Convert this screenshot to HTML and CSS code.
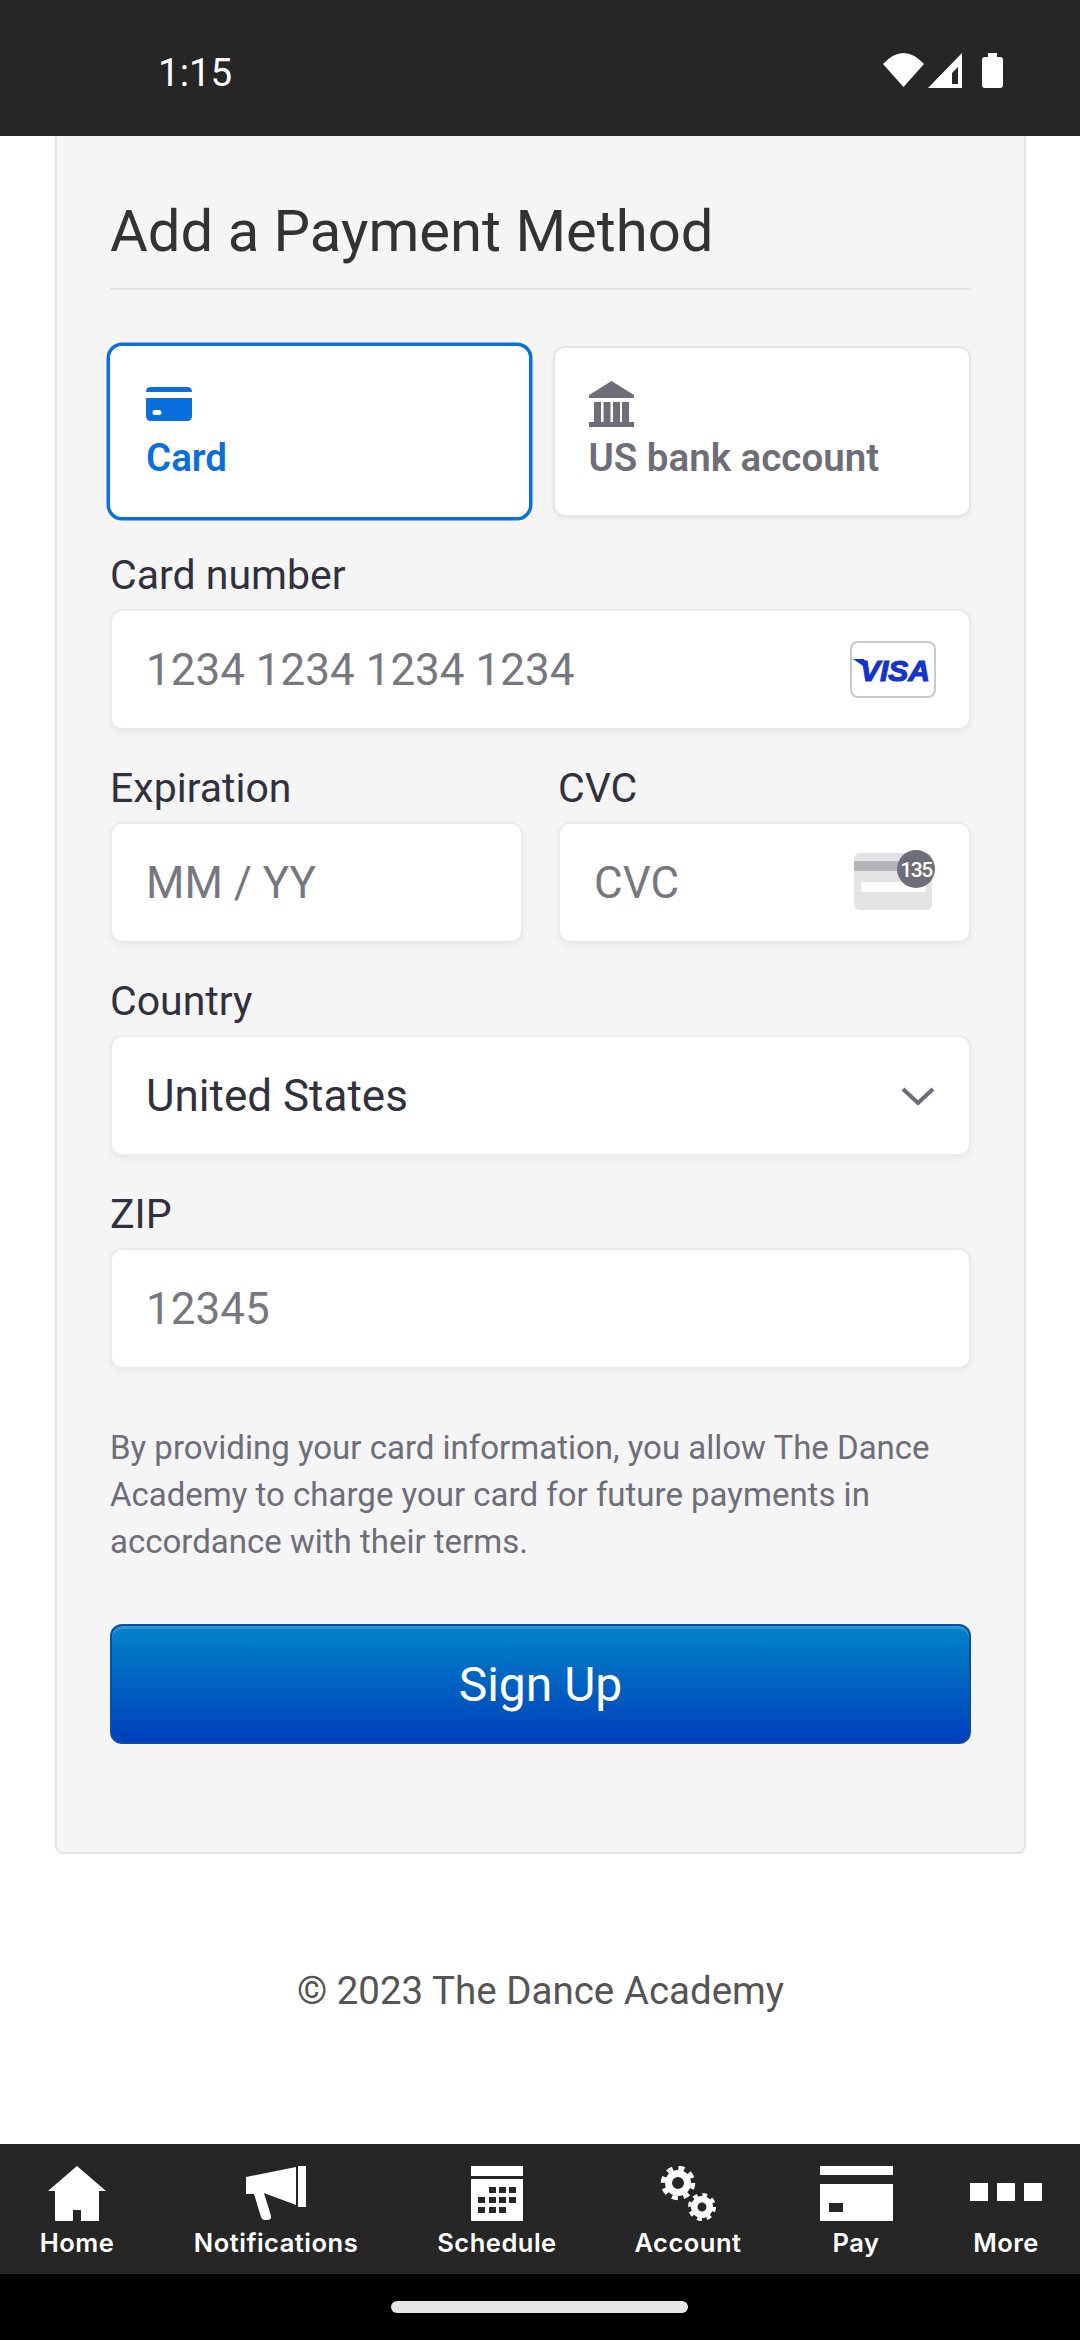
FILE: index.html
```html
<!DOCTYPE html>
<html lang="en">
  <head>
    <meta charset="UTF-8" />
    <meta name="viewport" content="width=device-width, initial-scale=1.0" />
    <title>Add a Payment Method</title>
    <link rel="stylesheet" href="styles.css">
  </head>
  <body>
    <div class="status-bar">
      <span class="status-time">1:15</span>
      <div class="status-icons">
        <svg width="41" height="34" viewBox="0 0 41 34"><path d="M20.5 34L0 11Q20.5-11 41 11Z" fill="#fff"/></svg>
        <svg class="status-cell" width="34" height="35" viewBox="0 0 34 35"><path fill-rule="evenodd" d="M34 0V35H0ZM24 31H30V14L24 20Z" fill="#fff"/></svg>
        <svg class="status-battery" width="21" height="35" viewBox="0 0 21 35"><path d="M6 0H15V4H18Q21 4 21 7V32Q21 35 18 35H3Q0 35 0 32V7Q0 4 3 4H6Z" fill="#fff"/></svg>
      </div>
    </div>

    <main class="page">
      <section class="card">
        <h1 class="card-title">Add a Payment Method</h1>

        <form class="payment-form">
          <div class="tabs">
            <div class="tab tab-active">
              <span class="tab-icon">
                <svg width="46" height="34" viewBox="0 0 46 34"><path fill-rule="evenodd" d="M0 5Q0 0 5 0H41Q46 0 46 5H0ZM0 11H46V29Q46 34 41 34H5Q0 34 0 29ZM9 23A2.500 2.500 0 0 0 9 28H13A2.500 2.500 0 0 0 13 23Z" fill="#0a6fdc"/></svg>
              </span>
              <span class="tab-label">Card</span>
            </div>
            <div class="tab">
              <span class="tab-icon">
                <svg width="45" height="46" viewBox="0 0 45 46"><g fill="#6d6e78"><path d="M22.5 0L45 14V17H0V14Z"/><rect x="5" y="21" width="7" height="20"/><rect x="14.5" y="21" width="7" height="20"/><rect x="24" y="21" width="7" height="20"/><rect x="33" y="21" width="7" height="20"/><rect y="41" width="45" height="5"/></g></svg>
              </span>
              <span class="tab-label">US bank account</span>
            </div>
          </div>

          <div class="field">
            <label class="field-label">Card number</label>
            <div class="input">
              <span class="placeholder">1234 1234 1234 1234</span>
              <svg class="visa-icon" width="86" height="57" viewBox="0 0 86 57">
                <rect x="1" y="1" width="84" height="55" rx="7" fill="#fff" stroke="#c9c9cc" stroke-width="2"/>
                <path d="M3 18L14 18L19 29Z" fill="#1434cb"/>
                <text class="visa-text" x="45" y="40" text-anchor="middle">VISA</text>
              </svg>
            </div>
          </div>

          <div class="field-row">
            <div class="field">
              <label class="field-label">Expiration</label>
              <div class="input"><span class="placeholder">MM / YY</span></div>
            </div>
            <div class="field">
              <label class="field-label">CVC</label>
              <div class="input">
                <span class="placeholder">CVC</span>
                <svg class="cvc-icon" width="82" height="60" viewBox="0 0 82 60">
                  <rect x="0" y="3" width="78" height="57" rx="6" fill="#e3e3e5"/>
                  <rect x="0" y="11" width="78" height="10" fill="#b6b6ba"/>
                  <rect x="7" y="32" width="65" height="10" rx="2" fill="#fff"/>
                  <circle cx="62" cy="19" r="19" fill="#6d6e78"/>
                  <text class="cvc-text" x="62" y="27" text-anchor="middle">135</text>
                </svg>
              </div>
            </div>
          </div>

          <div class="field">
            <label class="field-label">Country</label>
            <div class="input">
              <span class="input-value">United States</span>
              <svg width="34" height="20" viewBox="0 0 34 20"><path d="M2 3L17 17L32 3" fill="none" stroke="#6d6e78" stroke-width="4"/></svg>
            </div>
          </div>

          <div class="field">
            <label class="field-label">ZIP</label>
            <div class="input"><span class="placeholder">12345</span></div>
          </div>
        </form>

        <p class="terms">By providing your card information, you allow The Dance Academy to charge your card for future payments in accordance with their terms.</p>

        <button class="signup-button" type="button">Sign Up</button>
      </section>

      <footer class="copyright">© 2023 The Dance Academy</footer>
    </main>

    <nav class="tab-bar">
      <div class="nav-item">
        <svg width="58" height="55" viewBox="0 0 58 55"><path fill-rule="evenodd" d="M29 0L58 25H51V55H33V44H25V55H7V25H0Z" fill="#fff"/></svg>
        <span>Home</span>
      </div>
      <div class="nav-item">
        <svg width="60" height="55" viewBox="0 0 60 55"><g fill="#fff"><rect x="52" width="8" height="41"/><path d="M50 1V39L18 27L25 50Q25.500 54 21 54H19Q16 54 15 51L8 28H0V11Z"/></g></svg>
        <span>Notifications</span>
      </div>
      <div class="nav-item">
        <svg width="52" height="55" viewBox="0 0 52 55">
          <rect width="52" height="10" fill="#fff"/>
          <rect y="13" width="52" height="42" fill="#fff"/>
          <g fill="#262626">
            <rect x="18" y="21" width="7" height="6"/><rect x="28" y="21" width="7" height="6"/><rect x="38" y="21" width="7" height="6"/>
            <rect x="7" y="31" width="7" height="6"/><rect x="18" y="31" width="7" height="6"/><rect x="28" y="31" width="7" height="6"/><rect x="38" y="31" width="7" height="6"/>
            <rect x="7" y="41" width="7" height="6"/><rect x="18" y="41" width="7" height="6"/><rect x="28" y="41" width="7" height="6"/>
          </g>
        </svg>
        <span>Schedule</span>
      </div>
      <div class="nav-item">
        <svg width="56" height="55" viewBox="0 0 56 55" fill="none" stroke="#fff">
          <circle cx="18" cy="17" r="9.500" stroke-width="7"/>
          <circle cx="18" cy="17" r="15" stroke-width="4.500" stroke-dasharray="6 5.780"/>
          <circle cx="42" cy="41" r="7.750" stroke-width="6.500"/>
          <circle cx="42" cy="41" r="12" stroke-width="4" stroke-dasharray="4.700 4.725"/>
        </svg>
        <span>Account</span>
      </div>
      <div class="nav-item">
        <svg width="73" height="55" viewBox="0 0 73 55"><path fill-rule="evenodd" d="M0 0H73V9H0ZM0 18H73V55H0ZM9 37V46H23V37Z" fill="#fff"/></svg>
        <span>Pay</span>
      </div>
      <div class="nav-item">
        <svg width="72" height="55" viewBox="0 0 72 55"><g fill="#fff"><rect y="17" width="18" height="18"/><rect x="27" y="17" width="18" height="18"/><rect x="54" y="17" width="18" height="18"/></g></svg>
        <span>More</span>
      </div>
    </nav>

    <div class="gesture-bar"><div class="gesture-pill"></div></div>
  </body>
</html>
```

FILE: styles.css
```css
* {
  box-sizing: border-box;
}
body {
  margin: 0;
  width: 1080px;
  height: 2340px;
  display: flex;
  flex-direction: column;
  font-family: Roboto, "Liberation Sans", sans-serif;
  background-color: #fff;
  overflow: hidden;
}

/* status bar */
.status-bar {
  height: 136px;
  flex: none;
  display: flex;
  align-items: center;
  justify-content: space-between;
  padding: 8px 77px 0 158px;
  background-color: #262626;
  color: #fff;
}
.status-time {
  font-size: 38.5px;
}
.status-icons {
  display: flex;
  align-items: flex-start;
  gap: 4px;
  margin-top: -4px;
}
.status-battery {
  margin-left: 16px;
}

/* page */
.page {
  flex: 1;
  padding: 0 54px 0 55px;
}
.card {
  padding: 62px 53px 108px 53px;
  background-color: #f5f5f6;
  border: 2px solid #e4e4e4;
  border-top: none;
  border-radius: 0 0 8px 8px;
}
.card-title {
  margin: 0;
  padding-bottom: 24px;
  font-size: 58px;
  font-weight: 400;
  line-height: 66px;
  color: #333;
  border-bottom: 2px solid #e2e2e2;
}
.payment-form {
  display: flex;
  flex-direction: column;
  gap: 36px;
  margin-top: 56px;
}

/* tabs */
.tabs {
  display: grid;
  grid-template-columns: 1fr 1fr;
  gap: 24px;
}
.tab {
  height: 171px;
  display: flex;
  flex-direction: column;
  padding: 33px 34px 0;
  background-color: #fff;
  border: 2px solid #e6e6e6;
  border-radius: 12px;
  box-shadow: 0 2px 4px rgba(0, 0, 0, 0.05);
  color: #6d6e78;
}
.tab-active {
  border-color: #fff;
  box-shadow: 0 0 0 3.5px #0a6fdc;
  color: #0a6fdc;
}
.tab-icon {
  height: 46px;
  display: flex;
  align-items: center;
  margin-bottom: 9px;
}
.tab-label {
  font-size: 38.5px;
  font-weight: 600;
  line-height: 44px;
}

/* fields */
.field-row {
  display: grid;
  grid-template-columns: 1fr 1fr;
  gap: 35px;
}
.field-label {
  display: block;
  margin-bottom: 12px;
  font-size: 41px;
  line-height: 44px;
  color: #30313d;
}
.input {
  height: 121px;
  display: flex;
  align-items: center;
  justify-content: space-between;
  padding: 0 34px;
  background-color: #fff;
  border: 2px solid #ebebeb;
  border-radius: 12px;
  box-shadow: 0 3px 6px rgba(0, 0, 0, 0.05);
  font-size: 44px;
}
.placeholder {
  color: #77787f;
}
.input-value {
  color: #30313d;
}
.visa-icon {
  margin-right: -1px;
}
.visa-text {
  font-family: "Liberation Sans", sans-serif;
  font-size: 30px;
  font-weight: 700;
  font-style: italic;
  fill: #1434cb;
  stroke: #1434cb;
  stroke-width: 1.2px;
}
.cvc-icon {
  margin-right: -1px;
  margin-top: -5px;
}
.cvc-text {
  font-size: 21px;
  font-weight: 500;
  letter-spacing: -1.5px;
  fill: #fff;
}

/* bottom of the card */
.terms {
  margin: 55px 0 0;
  font-size: 33px;
  line-height: 47px;
  color: #6d6e78;
}
.signup-button {
  display: block;
  width: 100%;
  height: 120px;
  margin-top: 59px;
  background: linear-gradient(#0284c7, #003fbc);
  border: 2px solid #0a4fa5;
  border-radius: 12px;
  box-shadow: inset 0 3px 0 #2f93d3;
  font-family: inherit;
  font-size: 48px;
  color: #fff;
}
.copyright {
  margin-top: 110px;
  text-align: center;
  font-size: 38.5px;
  line-height: 54px;
  color: #555;
}

/* bottom navigation */
.tab-bar {
  height: 130px;
  flex: none;
  display: grid;
  grid-template-columns: 154px 244px 198px 184px 152px 148px;
  padding-top: 22px;
  background-color: #262626;
}
.nav-item {
  display: flex;
  flex-direction: column;
  align-items: center;
  gap: 7px;
  font-family: Inter, sans-serif;
  font-size: 25.5px;
  font-weight: 600;
  letter-spacing: 0.5px;
  line-height: 30px;
  color: #fff;
}
.gesture-bar {
  height: 66px;
  flex: none;
  padding-top: 27px;
  background-color: #000;
}
.gesture-pill {
  width: 297px;
  height: 12px;
  margin-left: 391px;
  border-radius: 6px;
  background-color: #e6e6e6;
}
```
